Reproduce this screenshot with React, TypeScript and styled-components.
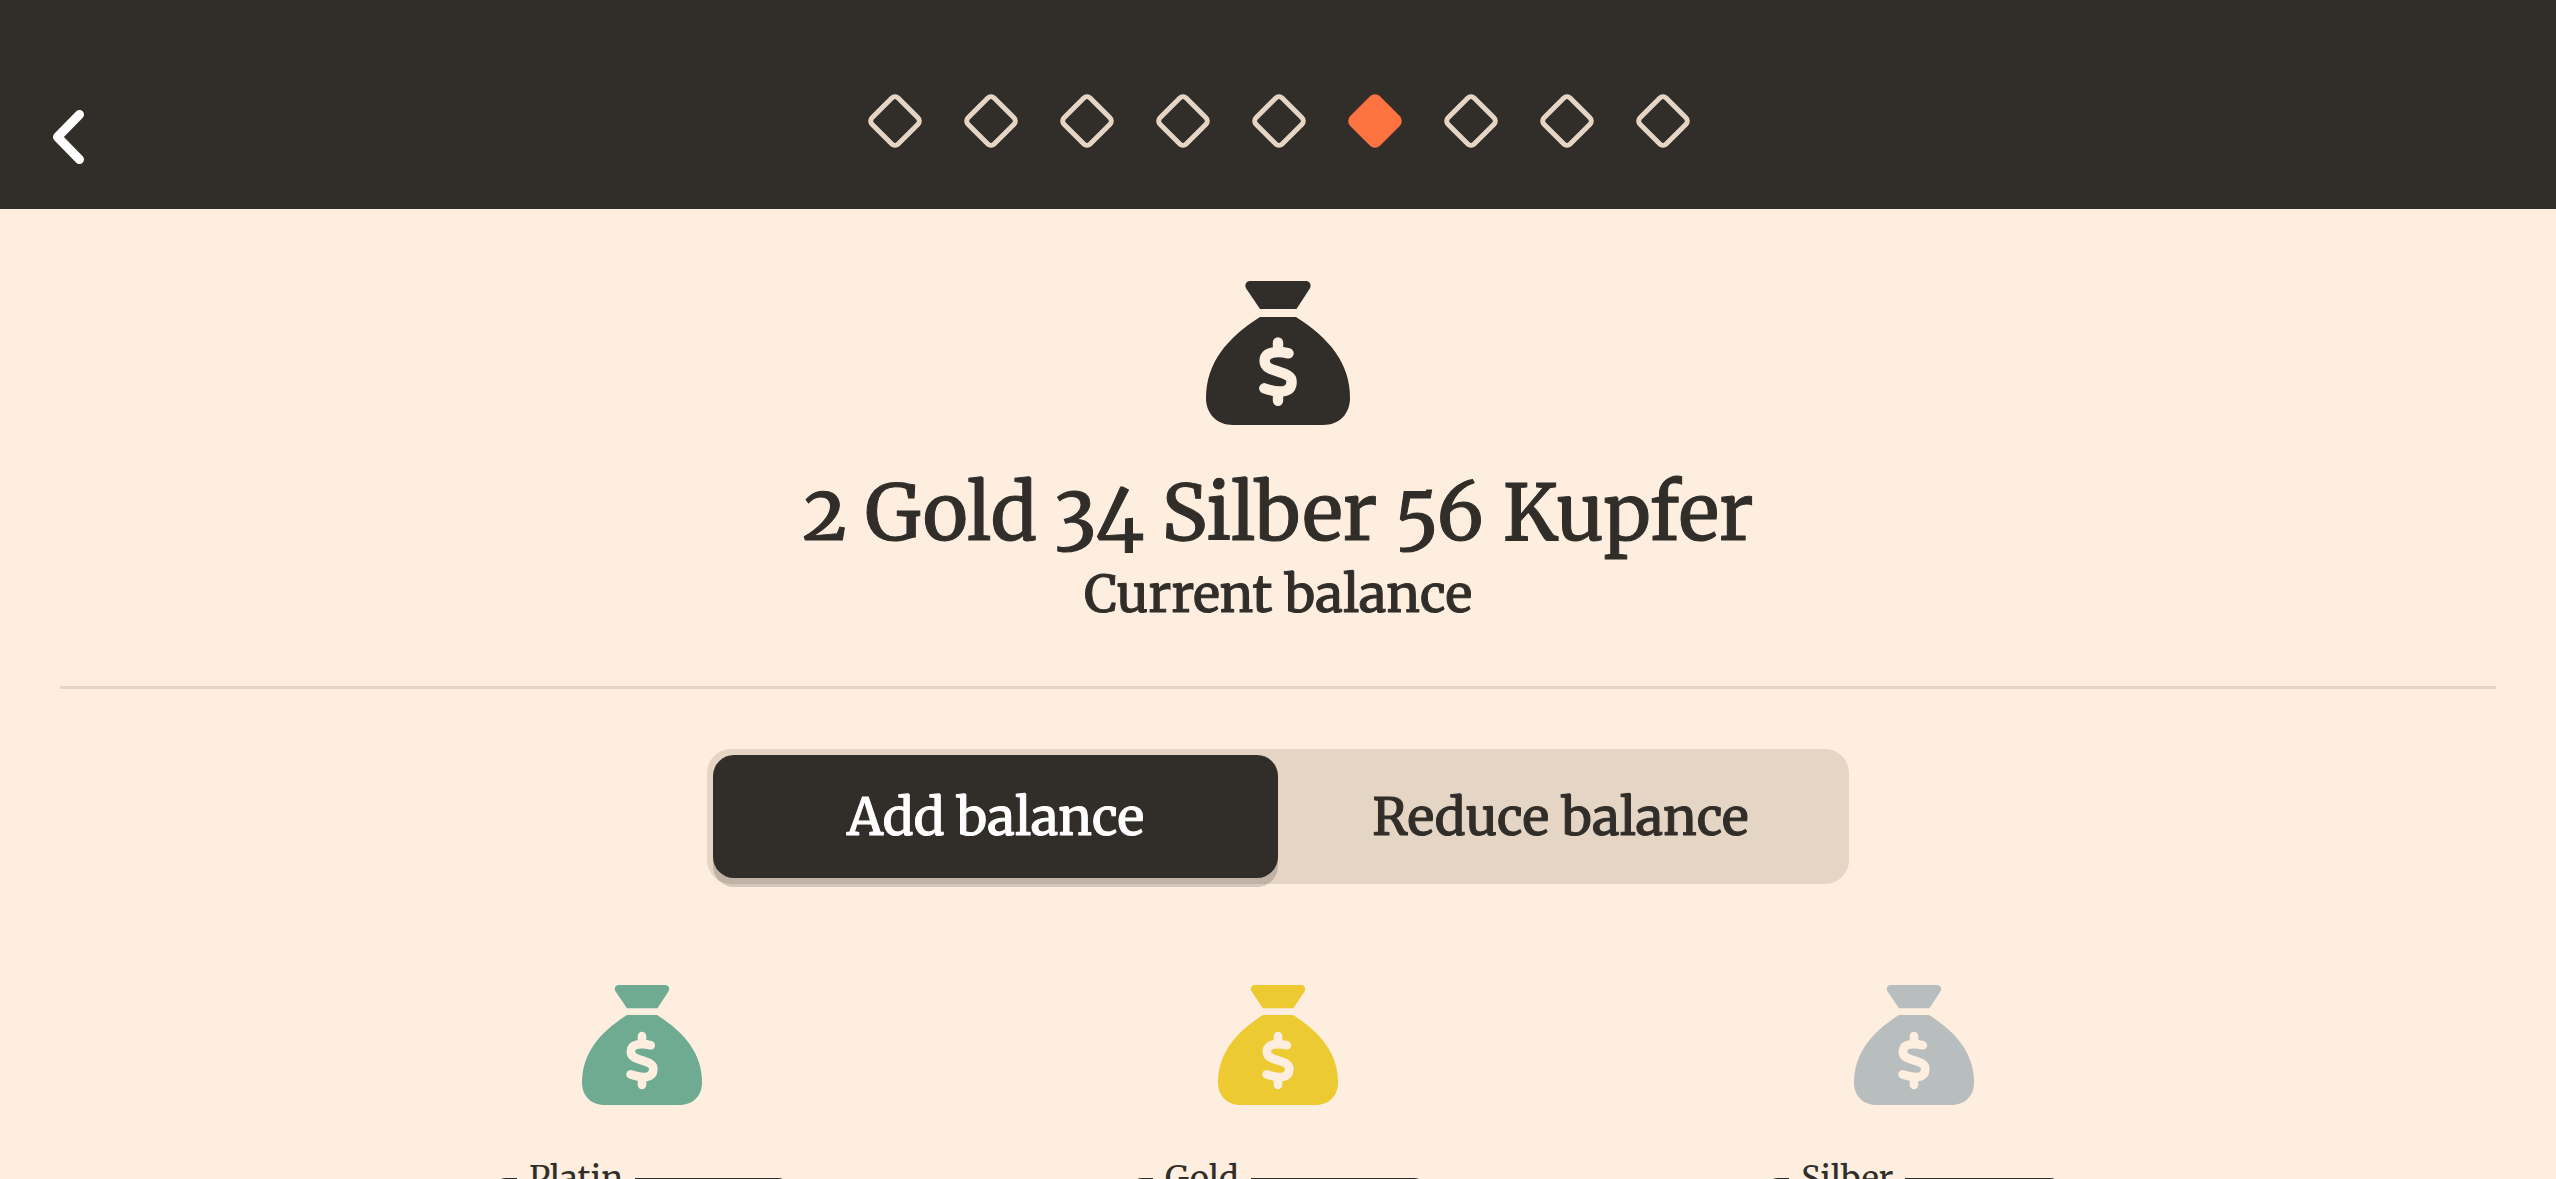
import React from "react";
import styled, { createGlobalStyle } from "styled-components";

const ink = "#312e29";
const paper = "#fdeee0";
const sand = "#e5d5c4";

const GlobalStyle = createGlobalStyle`
  * { box-sizing: border-box; }
  body {
    margin: 0;
    background: ${paper};
    color: ${ink};
    font-family: Merriweather, "DejaVu Serif Condensed", "DejaVu Serif", serif;
    font-variant-numeric: oldstyle-nums;
  }
  button, input { font: inherit; color: inherit; }
`;

const Screen = styled.div`
  display: flex;
  flex-direction: column;
  height: 100vh;
  overflow: hidden;
`;

const Header = styled.header`
  flex: none;
  display: grid;
  grid-template-columns: 1fr auto 1fr;
  align-items: start;
  padding: 100px 46px 35px 48px;
  background: ${ink};
`;

const BackButton = styled.button`
  display: flex;
  align-items: center;
  justify-content: flex-start;
  width: 74px;
  height: 74px;
  padding: 0 0 0 4px;
  border: 0;
  background: none;
  color: #fff;
  cursor: pointer;
`;

const Steps = styled.ol`
  display: flex;
  gap: 54px;
  margin: 0;
  padding: 0;
  list-style: none;
`;

const Step = styled.li<{ $active: boolean }>`
  width: 42px;
  height: 42px;
  border: 5px solid ${(p) => (p.$active ? "#fc7240" : sand)};
  border-radius: 7px;
  background: ${(p) => (p.$active ? "#fc7240" : "transparent")};
  transform: rotate(45deg);
`;

const Main = styled.main`
  flex: 1;
  min-height: 0;
  display: flex;
  flex-direction: column;
  align-items: center;
  padding: 72px 60px 0;
  & > * { flex: none; }
`;

const Amount = styled.h1`
  margin: 40px 0 0;
  font-size: 77px;
  line-height: 96px;
  font-weight: 400;
  -webkit-text-stroke: 1px currentColor;
`;

const Caption = styled.p`
  margin: 0;
  font-size: 51px;
  line-height: 66px;
  -webkit-text-stroke: 1px currentColor;
`;

const Divider = styled.hr`
  width: 100%;
  height: 3px;
  margin: 59px 0 60px;
  border: 0;
  background: ${sand};
`;

const Switcher = styled.div`
  display: grid;
  grid-template-columns: 1fr 1fr;
  width: 1142px;
  max-width: 100%;
  padding: 6px;
  border-radius: 24px;
  background: ${sand};
`;

const SwitchButton = styled.button<{ $active: boolean }>`
  height: 123px;
  padding: 0;
  border: 0;
  border-radius: 21px;
  font-size: 51px;
  -webkit-text-stroke: 1px currentColor;
  cursor: pointer;
  background: ${(p) => (p.$active ? ink : "transparent")};
  color: ${(p) => (p.$active ? "#fff" : ink)};
  box-shadow: ${(p) => (p.$active ? "0 9px 0 rgba(0, 0, 0, 0.16)" : "none")};
`;

const Purses = styled.div`
  display: grid;
  grid-template-columns: repeat(3, 1fr);
  width: 1908px;
  max-width: 100%;
  margin-top: 101px;
`;

const Purse = styled.div`
  display: flex;
  flex-direction: column;
  align-items: center;
  gap: 52px;
`;

const Field = styled.fieldset`
  width: 296px;
  height: 160px;
  margin: 0;
  padding: 0 20px;
  border: 3px solid ${ink};
  border-radius: 12px;
`;

const Legend = styled.legend`
  padding: 0 12px;
  font-size: 33px;
  line-height: 44px;
`;

const FieldInput = styled.input`
  width: 100%;
  height: 100px;
  border: 0;
  outline: 0;
  background: transparent;
  font-size: 51px;
`;

function MoneyBag({ size, color }: { size: number; color: string }) {
  return (
    <svg width={size} height={size} viewBox="0 0 144 144" fill="none" aria-hidden="true">
      <path
        fill={color}
        d="M44 0H100C104 0 106 4.500 103.500 8L90.500 28H54L40.500 8C38 4.500 40 0 44 0Z"
      />
      <path
        fill={color}
        d="M54 36H90C123 57 144 82 144 117C144 133 133 144 117 144H27C11 144 0 133 0 117C0 82 21 57 54 36Z"
      />
      <path
        stroke={paper}
        strokeWidth="10.400"
        strokeLinecap="round"
        d="M82.500 72.300C72 70 58.600 70 58.600 80C58.600 86 64 88 72 90.500C80 93 85.600 95 85.600 100.500C85.600 113 72 112 58.300 107.300M72 61.400V70M72 112V119.800"
      />
    </svg>
  );
}

const STEP_COUNT = 9;
const CURRENT_STEP = 5;

const coins = [
  { id: "platin", label: "Platin", color: "#6eab91" },
  { id: "gold", label: "Gold", color: "#edca31" },
  { id: "silber", label: "Silber", color: "#b8bdbd" },
];

export default function App() {
  const [mode, setMode] = React.useState("add");
  return (
    <>
      <GlobalStyle />
      <Screen>
        <Header>
          <BackButton type="button" aria-label="Back">
            <svg width="34" height="56" viewBox="0 0 34 56" fill="none" aria-hidden="true">
              <path
                d="M27.500 5.500L5.500 28L27.500 50.500"
                stroke="currentColor"
                strokeWidth="9"
                strokeLinecap="round"
                strokeLinejoin="round"
              />
            </svg>
          </BackButton>
          <Steps>
            {Array.from({ length: STEP_COUNT }, (_, i) => (
              <Step key={i} $active={i === CURRENT_STEP} />
            ))}
          </Steps>
        </Header>
        <Main>
          <MoneyBag size={144} color={ink} />
          <Amount>2 Gold 34 Silber 56 Kupfer</Amount>
          <Caption>Current balance</Caption>
          <Divider />
          <Switcher>
            <SwitchButton type="button" $active={mode === "add"} onClick={() => setMode("add")}>
              Add balance
            </SwitchButton>
            <SwitchButton type="button" $active={mode === "reduce"} onClick={() => setMode("reduce")}>
              Reduce balance
            </SwitchButton>
          </Switcher>
          <Purses>
            {coins.map((coin) => (
              <Purse key={coin.id}>
                <MoneyBag size={120} color={coin.color} />
                <Field>
                  <Legend>
                    <label htmlFor={coin.id}>{coin.label}</label>
                  </Legend>
                  <FieldInput id={coin.id} inputMode="numeric" />
                </Field>
              </Purse>
            ))}
          </Purses>
        </Main>
      </Screen>
    </>
  );
}
